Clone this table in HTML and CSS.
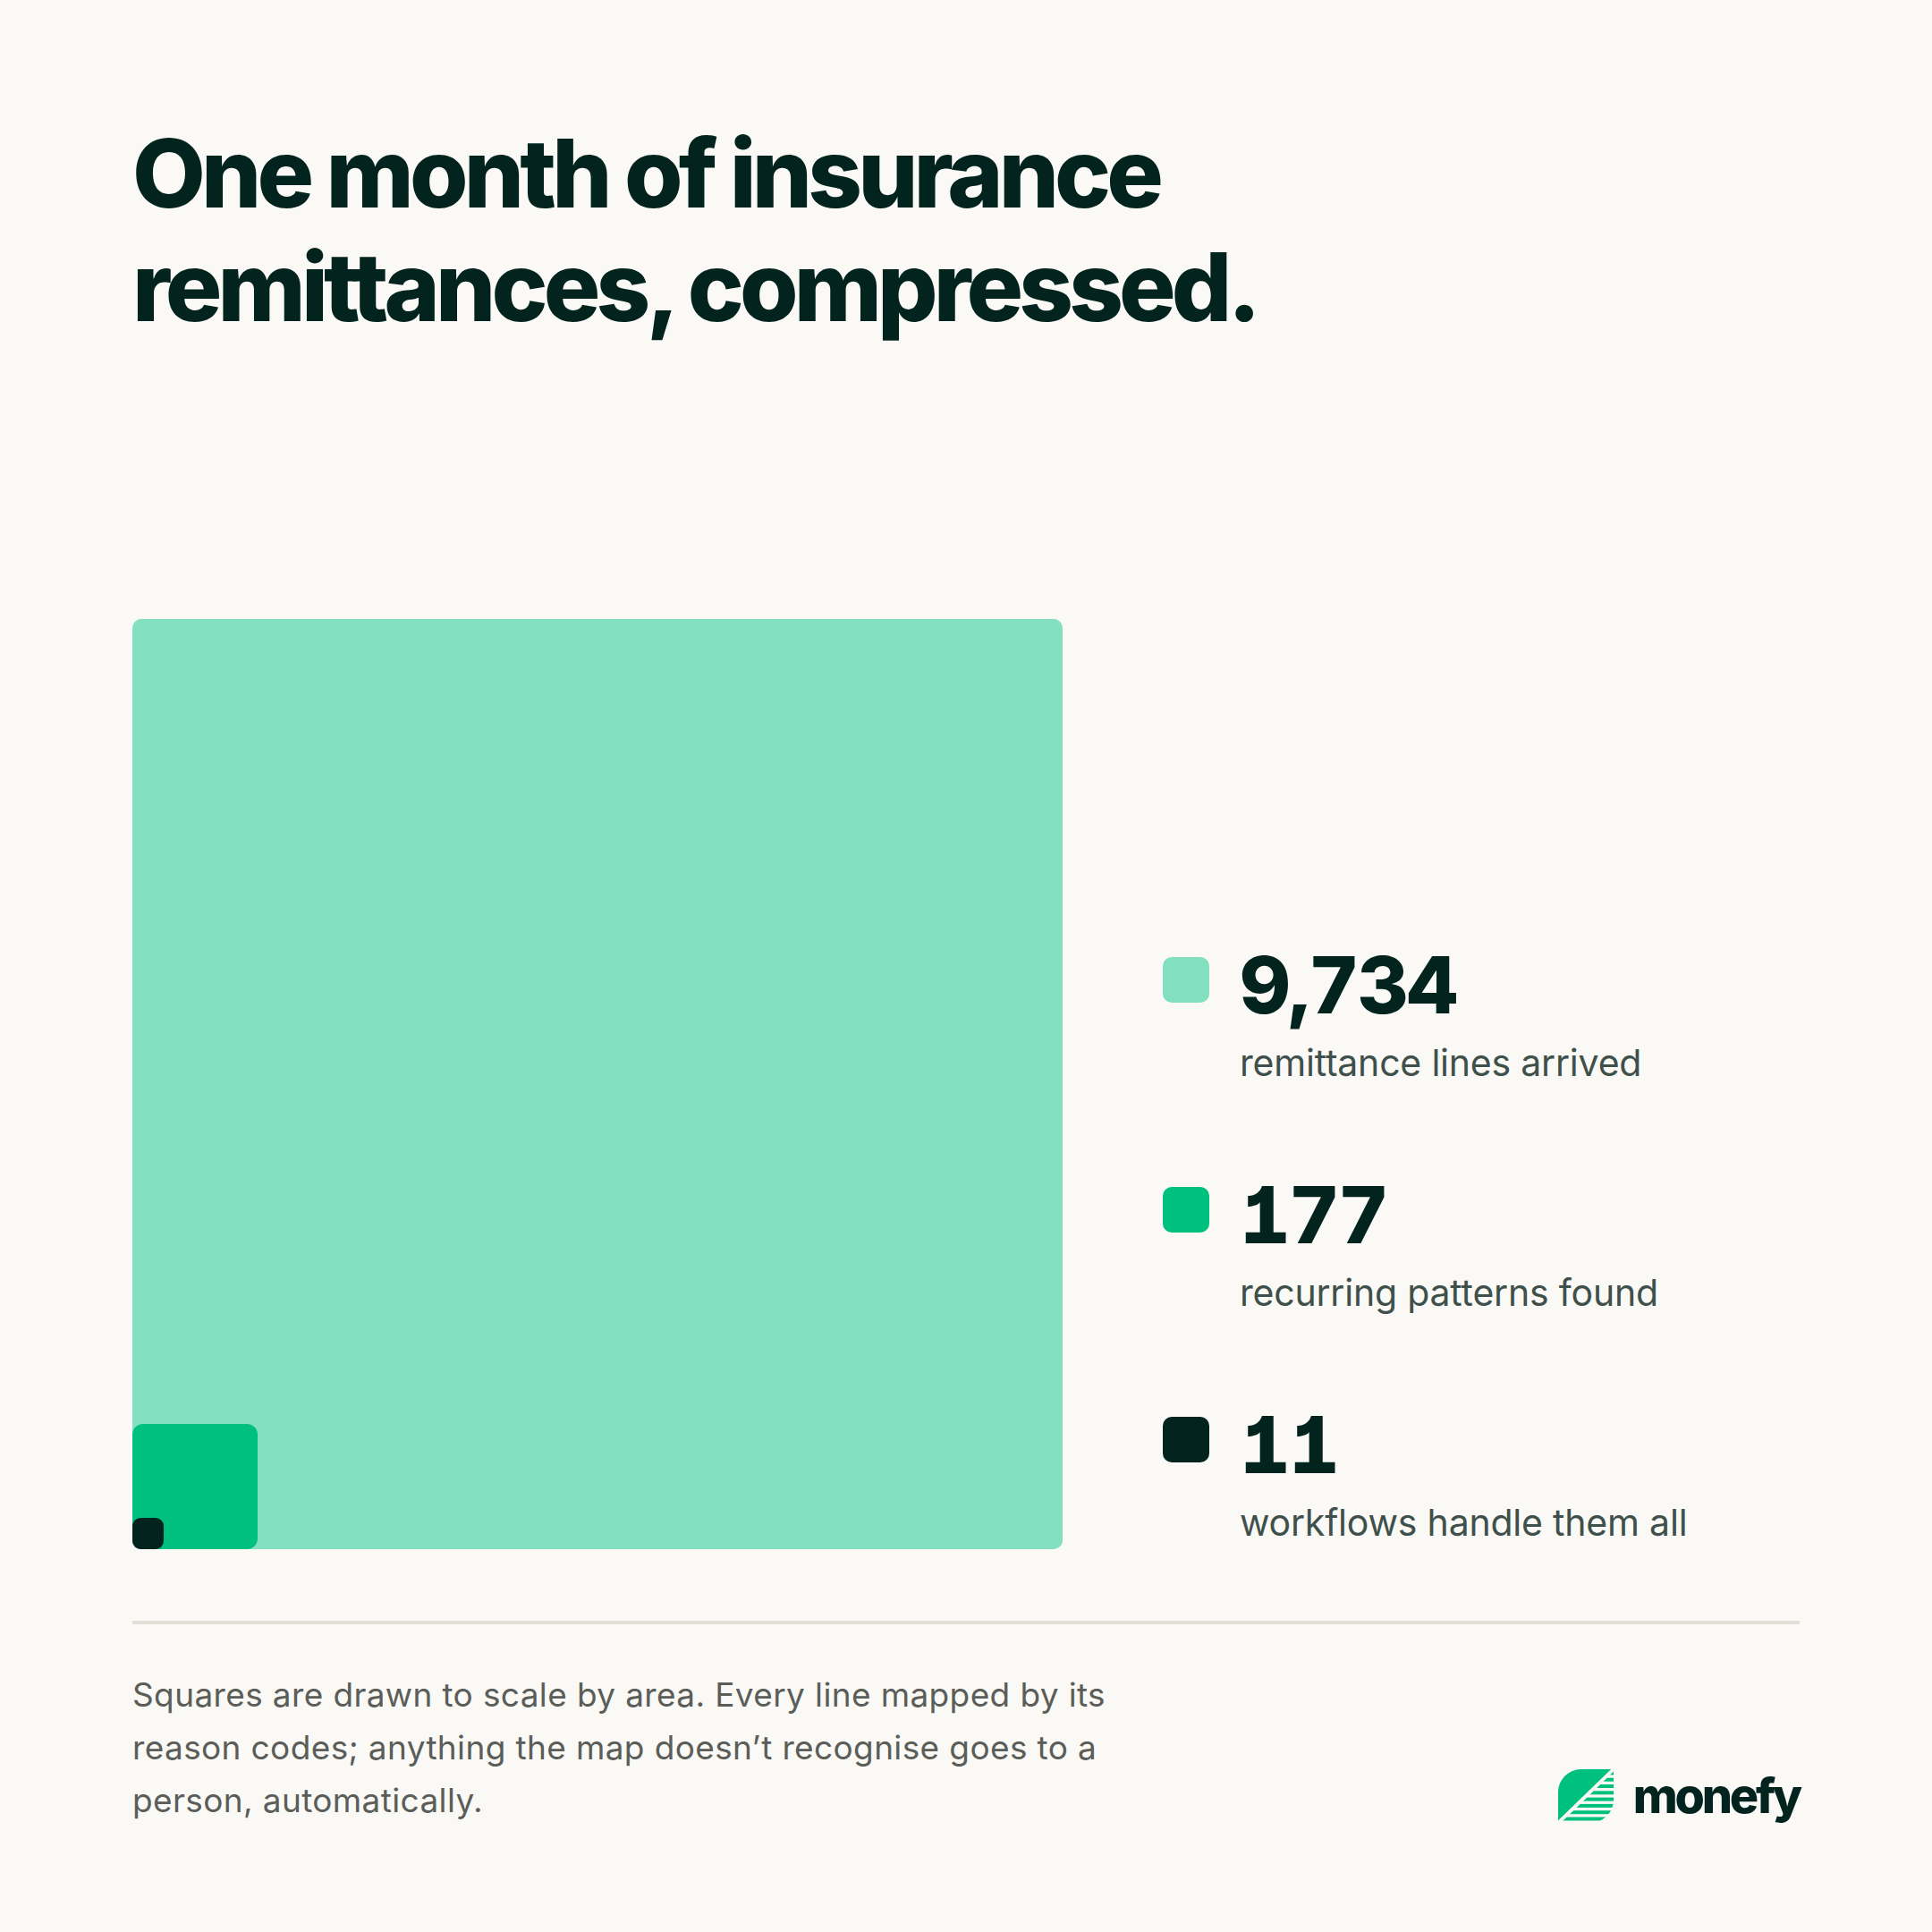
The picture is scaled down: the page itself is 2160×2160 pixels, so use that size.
FILE: index.html
```html
<!DOCTYPE html>
<html lang="en">
<head>
<meta charset="utf-8">
<title>One month of insurance remittances, compressed.</title>
<link rel="stylesheet" href="styles.css">
</head>
<body>
<main class="page">
  <h1 class="title">One month of insurance<br>remittances, compressed.</h1>

  <section class="chart">
    <div class="squares">
      <div class="sq sq-lines">
        <div class="sq sq-patterns">
          <div class="sq sq-workflows"></div>
        </div>
      </div>
    </div>

    <ul class="legend">
      <li class="item">
        <span class="swatch swatch-lines"></span>
        <div class="item-text">
          <div class="num">9,734</div>
          <div class="label">remittance lines arrived</div>
        </div>
      </li>
      <li class="item">
        <span class="swatch swatch-patterns"></span>
        <div class="item-text">
          <div class="num">177</div>
          <div class="label">recurring patterns found</div>
        </div>
      </li>
      <li class="item">
        <span class="swatch swatch-workflows"></span>
        <div class="item-text">
          <div class="num">11</div>
          <div class="label">workflows handle them all</div>
        </div>
      </li>
    </ul>
  </section>

  <footer class="footer">
    <p class="note">Squares are drawn to scale by area. Every line mapped by its reason codes; anything the map doesn’t recognise goes to a person, automatically.</p>
    <div class="brand">
      <svg class="brand-mark" viewBox="0 0 62 60" aria-hidden="true">
        <defs>
          <clipPath id="leaf">
            <path d="M0 60 L0 26 C0 11.6 11.6 0 26 0 L62 0 L62 34 C62 48.4 50.4 60 36 60 Z"/>
          </clipPath>
          <clipPath id="lower">
            <polygon points="62,2.6 62,60 3,60"/>
          </clipPath>
        </defs>
        <g clip-path="url(#leaf)">
          <polygon points="0,0 59.2,0 0,57.4" fill="#00c07f"/>
          <g clip-path="url(#lower)" fill="#00c07f">
            <rect x="0" y="2.4" width="62" height="4"/>
            <rect x="0" y="9.7" width="62" height="4"/>
            <rect x="0" y="17" width="62" height="4"/>
            <rect x="0" y="24.3" width="62" height="4"/>
            <rect x="0" y="31.6" width="62" height="4"/>
            <rect x="0" y="38.9" width="62" height="4"/>
            <rect x="0" y="46.2" width="62" height="4"/>
            <rect x="0" y="53.5" width="62" height="4"/>
          </g>
        </g>
      </svg>
      <span class="brand-name">monefy</span>
    </div>
  </footer>
</main>
</body>
</html>
```

FILE: styles.css
```css
* {
  box-sizing: border-box;
}

html,
body {
  margin: 0;
  padding: 0;
  background: #faf9f6;
}

body {
  width: 2160px;
  height: 2160px;
  font-family: Inter, "Liberation Sans", sans-serif;
  color: #03241e;
}

.page {
  padding: 130px 148px 0 148px;
  display: flex;
  flex-direction: column;
}

.title {
  margin: 0;
  font-size: 106px;
  line-height: 127px;
  font-weight: 800;
  letter-spacing: -0.046em;
  color: #03241e;
}

.chart {
  margin-top: 308px;
  display: flex;
  align-items: stretch;
  gap: 112px;
}

.squares {
  width: 1040px;
  height: 1040px;
  flex: none;
}

.sq {
  display: flex;
  align-items: flex-end;
  justify-content: flex-start;
}

.sq-lines {
  width: 1040px;
  height: 1040px;
  background: #82e0c0;
  border-radius: 10px;
}

.sq-patterns {
  width: 140px;
  height: 140px;
  background: #00c07f;
  border-radius: 12px;
}

.sq-workflows {
  width: 35px;
  height: 35px;
  background: #03241e;
  border-radius: 9px;
}

.legend {
  list-style: none;
  margin: 0;
  padding: 0 0 6px 0;
  display: flex;
  flex-direction: column;
  justify-content: flex-end;
  gap: 102px;
}

.item {
  display: flex;
  align-items: flex-start;
  gap: 34px;
}

.swatch {
  flex: none;
  width: 52px;
  height: 51px;
  margin-top: 13px;
  border-radius: 10px;
}

.swatch-lines {
  background: #82e0c0;
}

.swatch-patterns {
  background: #00c07f;
}

.swatch-workflows {
  background: #03241e;
}

.item-text {
  display: flex;
  flex-direction: column;
  gap: 19px;
}

.num {
  font-size: 88px;
  line-height: 88px;
  font-weight: 800;
  letter-spacing: -0.02em;
  color: #03241e;
  font-feature-settings: "cv01" 1, "tnum" 1;
}

.label {
  font-size: 41px;
  line-height: 48px;
  font-weight: 400;
  letter-spacing: -0.005em;
  color: #3f504b;
}

.footer {
  margin-top: 80px;
  border-top: 4px solid #e1ded8;
  padding-top: 49px;
  display: flex;
  justify-content: space-between;
  align-items: flex-end;
}

.note {
  margin: 0;
  width: 1140px;
  font-size: 37px;
  line-height: 59px;
  font-weight: 400;
  letter-spacing: 0.01em;
  color: #5b5d59;
}

.brand {
  display: flex;
  align-items: center;
  gap: 22px;
  margin-bottom: 4px;
}

.brand-mark {
  width: 62px;
  height: 60px;
  display: block;
}

.brand-name {
  font-size: 54px;
  line-height: 60px;
  font-weight: 800;
  letter-spacing: -0.06em;
  color: #03241e;
}
```
